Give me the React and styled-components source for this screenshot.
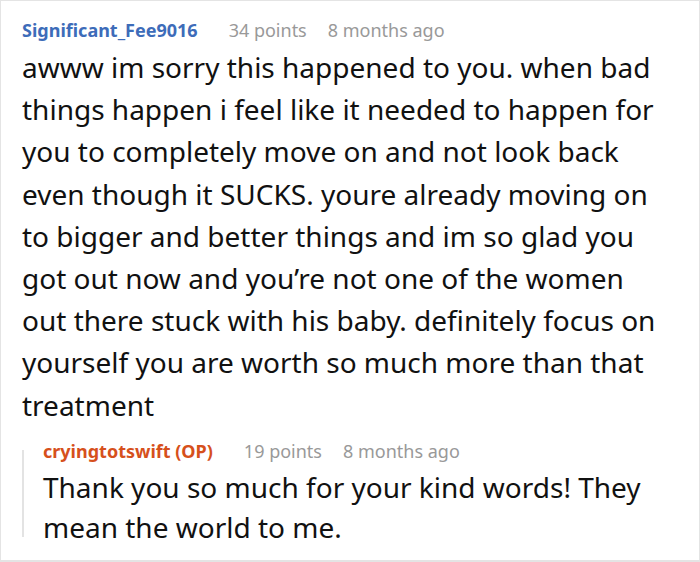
import styled, { createGlobalStyle } from "styled-components";

const GlobalStyle = createGlobalStyle`
  html, body {
    margin: 0;
    padding: 0;
    background: #fff;
  }
  body {
    font-family: "Noto Sans", "Open Sans", sans-serif;
  }
`;

const Frame = styled.div`
  box-sizing: border-box;
  width: 700px;
  height: 562px;
  border: 1px solid #e4e4e4;
  border-bottom-width: 2px;
  padding: 16px 34px 0 21px;
  overflow: hidden;
`;

const Meta = styled.div`
  display: flex;
  align-items: baseline;
  font-size: 18px;
  line-height: 26px;
`;

const Author = styled.span`
  font-weight: 700;
  color: ${(p) => (p.$op ? "#d6501c" : "#3d6cb9")};
  margin-right: 31px;
`;

const Stat = styled.span`
  color: #999;
  margin-right: 21px;
`;

const Body = styled.p`
  margin: 3px 0 0;
  font-size: 28px;
  line-height: ${(p) => (p.$reply ? "40px" : "42.2px")};
  color: #111;
`;

const Reply = styled.div`
  position: relative;
  margin-top: 12px;
  padding-left: 21px;

  &::before {
    content: "";
    position: absolute;
    left: 0;
    top: 12px;
    bottom: 10px;
    width: 2px;
    background: #e3e3e3;
  }
`;

const Comment = ({ author, op, points, age, children }) => (
  <>
    <Meta>
      <Author $op={op}>{author}</Author>
      <Stat>{points} points</Stat>
      <Stat>{age}</Stat>
    </Meta>
    <Body $reply={op}>{children}</Body>
  </>
);

const App = () => (
  <>
    <GlobalStyle />
    <Frame>
      <Comment author="Significant_Fee9016" points={34} age="8 months ago">
        awww im sorry this happened to you. when bad things happen i feel like
        it needed to happen for you to completely move on and not look back
        even though it SUCKS. youre already moving on to bigger and better
        things and im so glad you got out now and you’re not one of the women
        out there stuck with his baby. definitely focus on yourself you are
        worth so much more than that treatment
      </Comment>
      <Reply>
        <Comment author="cryingtotswift (OP)" op points={19} age="8 months ago">
          Thank you so much for your kind words! They mean the world to me.
        </Comment>
      </Reply>
    </Frame>
  </>
);

export default App;
